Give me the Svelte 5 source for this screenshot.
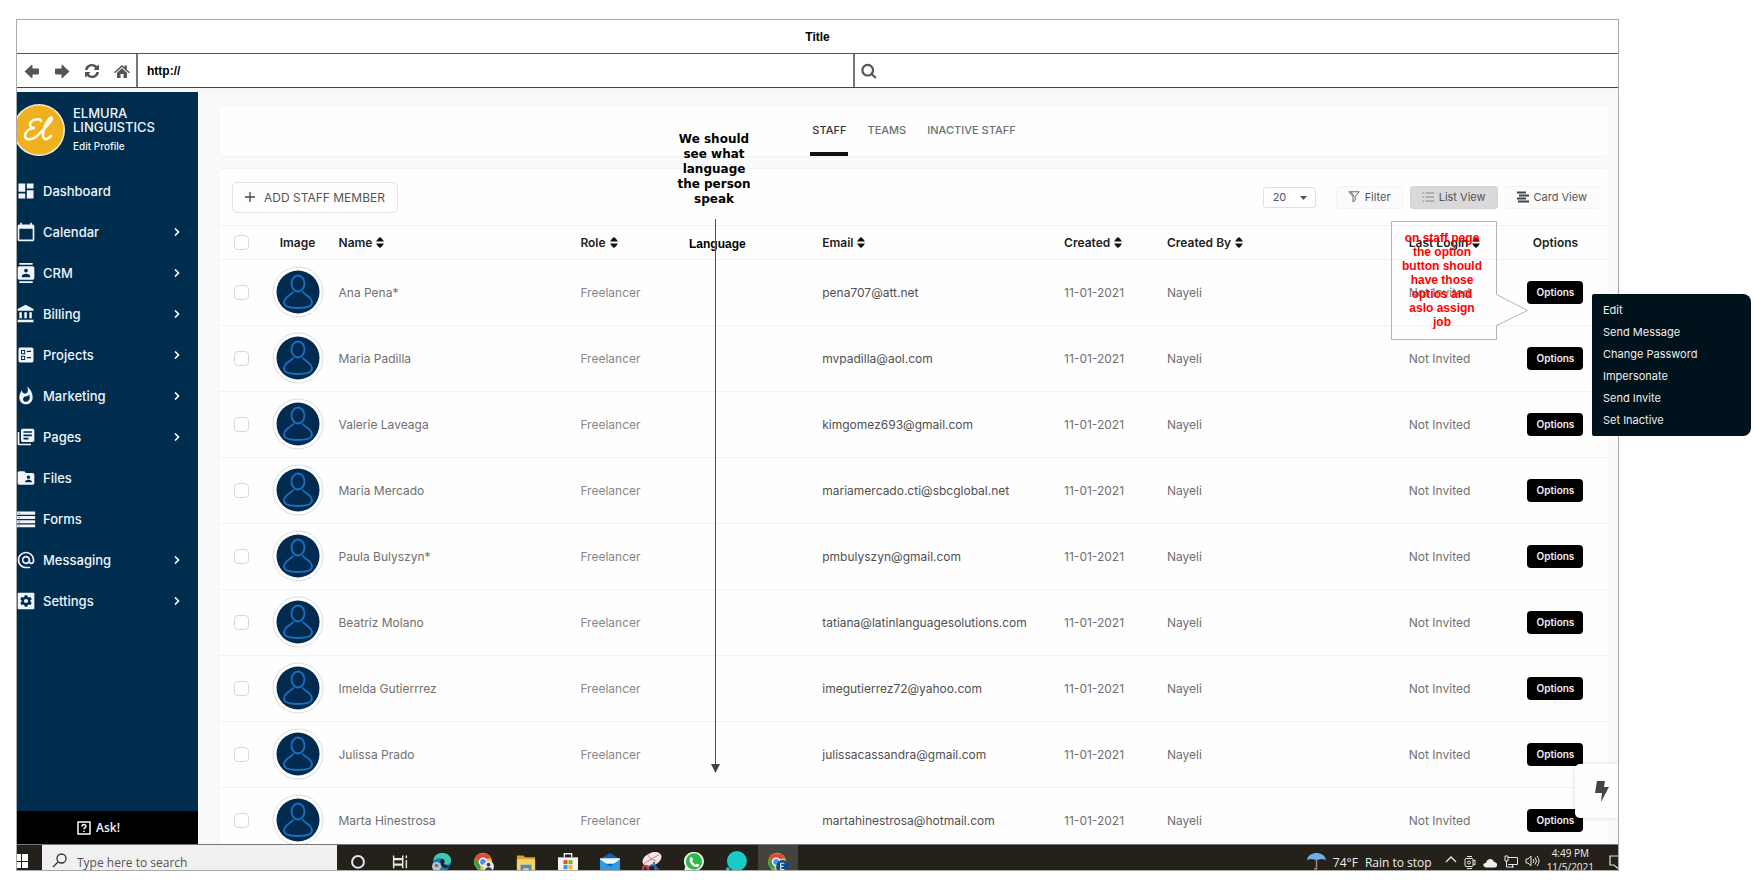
<script>
  const nav = [
    ['Dashboard', false], ['Calendar', true], ['CRM', true], ['Billing', true], ['Projects', true], ['Marketing', true],
    ['Pages', true], ['Files', false], ['Forms', false], ['Messaging', true], ['Settings', true]
  ];
  const icons = {
    Dashboard: 'M3 13h8V3H3v10zm0 8h8v-6H3v6zm10 0h8V11h-8v10zm0-18v6h8V3h-8z',
    Calendar: 'M20 3h-1V1h-2v2H7V1H5v2H4c-1.100 0-2 .9-2 2v16c0 1.100.9 2 2 2h16c1.100 0 2-.9 2-2V5c0-1.100-.9-2-2-2zm0 18H4V8h16v13z',
    CRM: 'M20 0H4v2h16V0zM4 24h16v-2H4v2zM20 4H4c-1.100 0-2 .9-2 2v12c0 1.100.9 2 2 2h16c1.100 0 2-.9 2-2V6c0-1.100-.9-2-2-2zm-8 2.750a2.250 2.250 0 110 4.500 2.250 2.250 0 010-4.500zM17 17H7v-1.500c0-1.670 3.330-2.500 5-2.500s5 .83 5 2.500V17z',
    Billing: 'M4 10v7h3v-7H4zm6 0v7h3v-7h-3zM2 22h19v-3H2v3zm14-12v7h3v-7h-3zM11.500 1L2 6v2h19V6l-9.500-5z',
    Projects: 'M19 3H5c-1.100 0-2 .9-2 2v14c0 1.100.9 2 2 2h14c1.100 0 2-.9 2-2V5c0-1.100-.9-2-2-2zM6 6h5v5H6V6zm1.200 1.200v2.600h2.600V7.200H7.200zM6 13h5v5H6v-5zm1.200 1.200v2.600h2.600v-2.600H7.200zM13 7h5v1.500h-5V7zm0 7.500h5V16h-5v-1.500z',
    Marketing: 'M13.500.67s.74 2.650.74 4.800c0 2.060-1.350 3.730-3.410 3.730-2.070 0-3.630-1.670-3.630-3.730l.03-.36C5.210 7.510 4 10.620 4 14c0 4.420 3.580 8 8 8s8-3.580 8-8C20 8.610 17.410 3.800 13.500.67zM11.710 19c-1.780 0-3.220-1.400-3.220-3.140 0-1.620 1.050-2.760 2.810-3.120 1.770-.36 3.600-1.210 4.620-2.580.39 1.290.59 2.650.59 4.040 0 2.650-2.150 4.800-4.800 4.800z',
    Pages: 'M4 6H2v14c0 1.100.9 2 2 2h14v-2H4V6zm16-4H8c-1.100 0-2 .9-2 2v12c0 1.100.9 2 2 2h12c1.100 0 2-.9 2-2V4c0-1.100-.9-2-2-2zm-1 9H9V9h10v2zm-4 4H9v-2h6v2zm4-8H9V5h10v2z',
    Files: 'M20 6h-8l-2-2H4c-1.100 0-2 .9-2 2v12c0 1.100.9 2 2 2h16c1.100 0 2-.9 2-2V8c0-1.100-.9-2-2-2zm-5 3c1.100 0 2 .9 2 2s-.9 2-2 2-2-.9-2-2 .9-2 2-2zm4 8h-8v-1c0-1.330 2.670-2 4-2s4 .67 4 2v1z',
    Forms: 'M1 3h22v4H1zM1 8.500h22v3.500H1zM1 13.500h22V17H1zM1 18.500h22V22H1zM3 4.500v1h1.500v-1zM3 9.800v1h1.500v-1zM3 14.800v1h1.500v-1zM3 19.800v1h1.500v-1z',
    Messaging: 'M12 2C6.480 2 2 6.480 2 12s4.480 10 10 10h5v-2h-5c-4.340 0-8-3.660-8-8s3.660-8 8-8 8 3.660 8 8v1.430c0 .79-.71 1.570-1.500 1.570s-1.500-.78-1.500-1.570V12c0-2.760-2.240-5-5-5s-5 2.240-5 5 2.240 5 5 5c1.380 0 2.640-.56 3.540-1.470.65.89 1.770 1.470 2.960 1.470 1.970 0 3.500-1.600 3.500-3.570V12c0-5.520-4.480-10-10-10zm0 13c-1.660 0-3-1.340-3-3s1.340-3 3-3 3 1.340 3 3-1.340 3-3 3z',
    Settings: 'M21 2H3c-.6 0-1 .4-1 1v18c0 .6.4 1 1 1h18c.6 0 1-.4 1-1V3c0-.6-.4-1-1-1zM10.500 5h3l.4 2 1.500.9 2-.7 1.500 2.600-1.600 1.300v1.800l1.600 1.300-1.500 2.600-2-.7-1.500.9-.4 2h-3l-.4-2-1.500-.9-2 .7-1.500-2.600 1.600-1.300v-1.800L5.100 9.800l1.500-2.600 2 .7 1.500-.9zM12 9.500a2.500 2.500 0 100 5 2.500 2.500 0 000-5z'
  };
  const staff = [
    ['Ana Pena*', 'pena707@att.net'],
    ['Maria Padilla', 'mvpadilla@aol.com'],
    ['Valerie Laveaga', 'kimgomez693@gmail.com'],
    ['Maria Mercado', 'mariamercado.cti@sbcglobal.net'],
    ['Paula Bulyszyn*', 'pmbulyszyn@gmail.com'],
    ['Beatriz Molano', 'tatiana@latinlanguagesolutions.com'],
    ['Imelda Gutierrrez', 'imegutierrez72@yahoo.com'],
    ['Julissa Prado', 'julissacassandra@gmail.com'],
    ['Marta Hinestrosa', 'martahinestrosa@hotmail.com']
  ];
  const menu = ['Edit', 'Send Message', 'Change Password', 'Impersonate', 'Send Invite', 'Set Inactive'];
</script>

{#snippet sort(label)}
  <button class="sort">{label}
    <svg width="8" height="11" viewBox="0 0 8 11"><path d="M0 4.500Q2 1 4 0q2 1 4 4.500zM0 6.500h8Q6 10 4 11 2 10 0 6.500z" fill="#111" /></svg>
  </button>
{/snippet}

<div class="canvas">
  <div class="window">
    <div class="title">Title</div>
    <div class="bar">
      <div class="tools">
        <button aria-label="Back"><svg width="16" height="16" viewBox="0 0 16 16"><path d="M.5 8.500L7.500 2q1-.5 1 .8V5.500H14q1 0 1 1v4q0 1-1 1H8.500v2.700q0 1.300-1 .8z" /></svg></button>
        <button aria-label="Forward"><svg width="16" height="16" viewBox="0 0 16 16"><path d="M15.500 8.500L8.500 2q-1-.5-1 .8V5.500H2q-1 0-1 1v4q0 1 1 1h5.500v2.700q0 1.300 1 .8z" /></svg></button>
        <button aria-label="Reload"><svg width="16" height="16" viewBox="0 0 16 16"><path d="M1 7C1.500 3 4.500 1 8 1c2 0 3.700.8 5 2l2-1.500V7H9.500l1.700-2C10 4 9.200 3.300 8 3.300 5.800 3.300 4.200 4.800 3.600 7zM15 9c-.5 4-3.500 6-7 6-2 0-3.700-.8-5-2l-2 1.500V9h5.500l-1.700 2c1.200 1 2 1.700 3.200 1.700 2.200 0 3.800-1.500 4.400-3.700z" /></svg></button>
        <button aria-label="Home"><svg width="16" height="16" viewBox="0 0 16 16"><path d="M8 2l2.500 2.300V2.500h2.300v4L16 9.200l-1 1L8 4 1 10.200l-1-1zM8 5.300l5 4.400V15H9.500v-4h-3v4H3V9.700z" /></svg></button>
      </div>
      <input class="url" aria-label="Address" value="http://" />
      <div class="find">
        <svg width="16" height="16" viewBox="0 0 16 16" fill="none" stroke="#555" stroke-width="2.200"><circle cx="6.700" cy="7.200" r="5.300" /><path d="M10.500 11l4.300 4" /></svg>
      </div>
    </div>

    <div class="app">
      <aside>
        <div class="profile">
          <svg class="logo" width="48" height="52" viewBox="0 0 48 52">
            <circle cx="22" cy="26" r="26" fill="#f3eeda" /><circle cx="22" cy="26" r="24.500" fill="#f0b120" />
            <path d="M24 17c-1-3-10-2-11 3-.5 3 2 4 5 4-5 0-9 3-10 7-1 6 8 6 14-1 5-5 14-13 13-16-1-2-5 3-7 8-2 6-3 12 0 13 2 .5 4-1 6-3" fill="none" stroke="#fffbe8" stroke-width="2.600" stroke-linecap="round" />
          </svg>
          <div>
            <div class="brand">ELMURA<br />LINGUISTICS</div>
            <a class="edit" href="#profile">Edit Profile</a>
          </div>
        </div>
        <nav>
          {#each nav as [name, more]}
            <a href="#{name}">
              <svg width="20" height="20" viewBox="0 0 24 24" fill="#eff5fa" fill-rule="evenodd"><path d={icons[name]} /></svg>
              <span>{name}</span>
              {#if more}<svg width="6" height="8" viewBox="0 0 6 8"><path d="M1 0.500L4.500 4 1 7.500" fill="none" stroke="#fff" stroke-width="1.600" /></svg>{/if}
            </a>
          {/each}
        </nav>
        <button class="ask">
          <svg width="14" height="14" viewBox="0 0 14 14" fill="none" stroke="#fff" stroke-width="1.500"><rect x="1" y="1" width="12" height="12" /><path d="M5 5.500C5 3 9 3 9 5.300 9 6.600 7 6.700 7 8.300M7 9.700v1.300" /></svg>
          Ask!
        </button>
      </aside>

      <main>
        <div class="card tabs">
          <button class="on">STAFF</button><button>TEAMS</button><button>INACTIVE STAFF</button>
        </div>
        <div class="card list">
          <div class="toolbar">
            <button class="add"><svg width="10" height="10" viewBox="0 0 10 10"><path d="M5 0v10M0 5h10" stroke="#444" stroke-width="1.300" /></svg>ADD STAFF MEMBER</button>
            <div class="size">
              <select aria-label="Rows per page"><option>20</option></select>
              <svg width="7" height="4" viewBox="0 0 7 4"><path d="M0 0h7L3.500 4z" fill="#555" /></svg>
            </div>
            <div class="views">
              <button><svg width="12" height="12" viewBox="0 0 12 12" fill="none" stroke="#666"><path d="M.8 .8h10.400L7.200 5.500v3.700L5 11V5.500zM3 .8L6 5.500" /></svg>Filter</button>
              <button class="on"><svg width="12" height="12" viewBox="0 0 12 12" stroke="#888"><path d="M3.500 2H12M3.500 6H12M3.500 10H12M.5 2h1.500M.5 6h1.500M.5 10h1.500" /></svg>List View</button>
              <button><svg width="12" height="12" viewBox="0 0 12 12" stroke="#444" stroke-width="1.800"><path d="M0 1.500h9M2 4.500h10M0 7.500h9M1 10.500h11" /></svg>Card View</button>
            </div>
          </div>
          <table>
            <colgroup>
              <col class="c-check" /><col class="c-img" /><col class="c-wide" /><col class="c-wide" /><col class="c-wide" />
              <col class="c-date" /><col class="c-wide" /><col class="c-login" /><col class="c-opt" />
            </colgroup>
            <thead>
              <tr>
                <th><input type="checkbox" aria-label="Select all" /></th>
                <th class="mid">Image</th>
                <th>{@render sort('Name')}</th>
                <th>{@render sort('Role')}</th>
                <th>{@render sort('Email')}</th>
                <th>{@render sort('Created')}</th>
                <th>{@render sort('Created By')}</th>
                <th>{@render sort('Last Login')}</th>
                <th class="mid">Options</th>
              </tr>
            </thead>
            <tbody>
              {#each staff as [name, email]}
                <tr>
                  <td><input type="checkbox" aria-label="Select {name}" /></td>
                  <td class="mid">
                    <svg class="avatar" width="52" height="52" viewBox="0 0 52 52">
                      <circle cx="26" cy="26" r="25" fill="#fff" stroke="#dcdde0" />
                      <circle cx="26" cy="26" r="21.500" fill="#032b50" />
                      <g fill="none" stroke="#1d70c0" stroke-width="1.800"><ellipse cx="26" cy="17.500" rx="6.500" ry="8" /><path d="M21.500 25.500C20 29 12 30 12 36.500c0 4 7 5.500 14 5.500s14-1.500 14-5.500c0-6.500-8-7.500-9.500-11" /></g>
                    </svg>
                  </td>
                  <td>{name}</td>
                  <td class="soft">Freelancer</td>
                  <td class="mail">{email}</td>
                  <td>11-01-2021</td>
                  <td>Nayeli</td>
                  <td>Not Invited</td>
                  <td class="mid"><button class="opt">Options</button></td>
                </tr>
              {/each}
            </tbody>
          </table>
        </div>
        <button class="bolt" aria-label="Quick actions"><svg width="14" height="21" viewBox="0 0 14 21"><path d="M2 0h8L9 6h5L6 21l1-9H0z" fill="#444" /></svg></button>
      </main>
    </div>

    <footer>
      <button class="start" aria-label="Start"><svg width="16" height="16" viewBox="0 0 16 16" fill="#fff"><path d="M0 0h4v7H0zM5 0h6v7H5zM0 8h4v6H0zM5 8h6v6H5z" /></svg></button>
      <label class="search">
        <svg width="16" height="16" viewBox="0 0 16 16" fill="none" stroke="#333" stroke-width="1.300"><circle cx="9.500" cy="5.500" r="4.500" /><path d="M6 9l-5 5" /></svg>
        <input aria-label="Search" placeholder="Type here to search" />
      </label>
      <div class="apps">
        <svg viewBox="0 0 24 22"><circle cx="12" cy="12" r="6.500" fill="none" stroke="#e6e6e6" stroke-width="2.200" /></svg>
        <svg viewBox="0 0 24 22"><path d="M5 5v3.500h10V5M5 19v-3.500h10V19M5 9.500h10v5H5zM19 5v3M19 10v9" fill="none" stroke="#e6e6e6" stroke-width="1.600" /></svg>
        <svg viewBox="0 0 24 22"><circle cx="12" cy="12" r="10" fill="#1478c8" /><path d="M3 8C6 0 20 0 22 9c.5 5-4 7-8 5 2-3 0-6-4-6-3 0-5 1-7 3z" fill="#3bc9a8" /><path d="M14 14c2-3 0-6-3-5-2 3 0 9 5 10l6-3c-3 1-6 0-8-2z" fill="#1f2220" /><circle cx="6" cy="17" r="5" fill="#b9c4cc" /><circle cx="6" cy="16" r="2" fill="#66737c" /></svg>
        <svg viewBox="0 0 24 22"><circle cx="11" cy="12" r="10" fill="#f2c230" /><path d="M2 8a10 10 0 0118 0l-9 1-3 5z" fill="#dd4a3d" /><path d="M2 8l6 7v6A10 10 0 012 8z" fill="#2da04c" /><circle cx="11" cy="12" r="4" fill="#4a8cf0" stroke="#fff" stroke-width="1.500" /><circle cx="17" cy="17" r="6" fill="#dfe6ee" /><circle cx="17" cy="15" r="2" fill="#333c48" /><path d="M13 21c1-4 7-4 8 0z" fill="#333c48" /></svg>
        <svg viewBox="0 0 24 22"><path d="M2 5h7l2 2h11v15H2z" fill="#d9a02c" /><path d="M2 9h20v13H2z" fill="#f8d264" /><path d="M6 15h12v7h-3v-3H9v3H6z" fill="#3e8fd0" /></svg>
        <svg viewBox="0 0 24 22"><path d="M8 7V3h8v4" fill="none" stroke="#eee" stroke-width="1.500" /><path d="M1 7h22v15H1z" fill="#f5f5f5" /><path d="M7 10h4.500v4.500H7z" fill="#e8502c" /><path d="M12.500 10H17v4.500h-4.500z" fill="#78b72a" /><path d="M7 15.500h4.500V20H7z" fill="#2a9fe0" /><path d="M12.500 15.500H17V20h-4.500z" fill="#f2b818" /></svg>
        <svg viewBox="0 0 24 22"><path d="M1 9l11-7 11 7v13H1z" fill="#0f62ac" /><path d="M1 8h22v6H1z" fill="#f4f7fa" /><path d="M1 9l11 8 11-8v13H1z" fill="#2d9ae4" /></svg>
        <svg viewBox="0 0 24 22"><ellipse cx="12" cy="9" rx="11" ry="7" transform="rotate(-25 12 9)" fill="#f0e8e8" /><path d="M3 14l8-5 9-5M11 9L7 4M11 9l6 2" stroke="#d87070" fill="none" /><path d="M5 19l8-4M14 12l2 10M14 15l5 6" stroke="#2b67a8" stroke-width="2" fill="none" /><circle cx="5" cy="19" r="3" fill="none" stroke="#d23a3a" stroke-width="2" /></svg>
        <svg viewBox="0 0 24 22"><path d="M12 1a10.500 10.500 0 11-5 19.500L1 22l1.500-5A10.500 10.500 0 0112 1z" fill="#eefaf0" /><circle cx="12" cy="11.500" r="9" fill="#2fb84c" /><path d="M8 7l2 0 1 3-1 1c1 2 2 3 4 4l1-1 3 1c0 2-2 3-4 2.500C10 16.500 7 13 7 9.500z" fill="#fff" /></svg>
        <svg viewBox="0 0 24 22"><circle cx="13" cy="11" r="11" fill="#18cdc8" /><circle cx="3" cy="20" r="2" fill="#18cdc8" /></svg>
        <div class="active"><svg viewBox="0 0 24 22"><circle cx="11" cy="12" r="10" fill="#f2c230" /><path d="M2 8a10 10 0 0118 0l-9 1-3 5z" fill="#dd4a3d" /><path d="M2 8l6 7v6A10 10 0 012 8z" fill="#2da04c" /><circle cx="10" cy="12" r="4" fill="#4a8cf0" stroke="#fff" stroke-width="1.500" /><circle cx="17" cy="17" r="7" fill="#0d4c8c" /><path d="M19 13.500h-4v7h4M15 17h3" fill="none" stroke="#d8e6f5" stroke-width="1.300" /></svg></div>
      </div>
      <div class="tray">
        <svg width="19" height="20" viewBox="0 0 19 20"><path d="M0 9C1 4 5 2 9.500 2S18 4 19 9l-4-1-5.500 1L4 8z" fill="#6bb0ea" /><path d="M9.500 8v10H7" stroke="#a08880" fill="none" stroke-width="1.500" /></svg>
        <span>74°F</span><span class="rain">Rain to stop</span>
        <svg width="12" height="8" viewBox="0 0 12 8"><path d="M1 7l5-5 5 5" fill="none" stroke="#e6e6e6" stroke-width="1.300" /></svg>
        <svg width="12" height="14" viewBox="0 0 12 14" fill="none" stroke="#e6e6e6"><rect x="1" y="3.500" width="8" height="8" rx="1" /><path d="M9 6l2-1v5l-2-1M3 1.500h5M3 13.500h5" /><circle cx="5" cy="7.500" r="1.500" /></svg>
        <svg width="14" height="14" viewBox="0 0 14 14"><path d="M3 12.500C-1 12 0 7.500 3 8c1-5 7-5 8-1 4 0 4 5 1 5.500z" fill="#eee" /></svg>
        <svg width="14" height="14" viewBox="0 0 14 14" fill="none" stroke="#e6e6e6"><path d="M4 2.500h9.500v7H4M1 1h3v5H1zM2.500 6v6H10M8.500 9.500V12" /></svg>
        <svg width="15" height="12" viewBox="0 0 15 12" fill="none" stroke="#e6e6e6"><path d="M1 4h2l3-3v10L3 8H1zM8 4q2 2 0 4M10 2.500q3 3.500 0 7M12 1q4 5 0 10" /></svg>
        <div class="clock"><div>4:49 PM</div><div>11/5/2021</div></div>
        <svg width="9" height="14" viewBox="0 0 9 14" fill="none" stroke="#e6e6e6" stroke-width="1.200"><path d="M9 1H1v9h4l4 3.500" /></svg>
      </div>
    </footer>
  </div>

  <div class="note">We should see what language the person speak</div>
  <div class="language">Language</div>
  <svg class="arrow" width="9" height="554" viewBox="0 0 9 554"><path d="M4.500 0v548" stroke="#555" /><path d="M0 545h9l-4.500 9z" fill="#444" /></svg>
  <div class="callout">
    <svg width="138" height="119" viewBox="0 0 138 119"><path d="M.5 .5h105v73l31 16-31 15v14H.5z" fill="none" stroke="#b4b4b4" /></svg>
    <p>on staff page the option button should have those optios and aslo assign job</p>
  </div>
  <div class="menu">
    {#each menu as item}<button>{item}</button>{/each}
  </div>
</div>

<style>
  :global(body) { background: #fff; }
  .canvas, .canvas * { box-sizing: border-box; }
  .canvas { position: relative; height: 100vh; padding: 19px 139px 9px 16px; font-family: Inter, sans-serif; font-size: 12px; color: #707070; overflow: hidden; }
  button { font: inherit; color: inherit; background: none; border: 0; padding: 0; }
  a { color: inherit; text-decoration: none; }
  svg { display: block; flex: none; }
  .window { height: 100%; display: flex; flex-direction: column; border: 1px solid #aaa; }
  .title { height: 33px; flex: none; display: flex; align-items: center; justify-content: center; font: bold 12px "Liberation Sans", sans-serif; color: #000; }
  .bar { height: 35px; flex: none; display: flex; border-top: 1px solid #555; border-bottom: 1px solid #444; }
  .tools { width: 121px; padding: 0 7px; display: flex; align-items: center; gap: 14px; border-right: 2px solid #777; }
  .tools svg { fill: #555; }
  .url { flex: 698; min-width: 0; border: 0; padding: 0 9px; font: bold 12px "Liberation Sans", sans-serif; color: #000; }
  .find { flex: 758; display: flex; align-items: center; padding-left: 6px; border-left: 2px solid #777; }
  .app { display: flex; flex: 1; min-height: 0; background: #fafafb; border-top: 4px solid #f5f6f7; overflow: hidden; }
  aside { width: 181px; flex: none; background: #002d4e; color: #eff5fa; display: flex; flex-direction: column; }
  .profile { height: 78px; flex: none; padding-top: 12px; display: flex; gap: 8px; }
  .brand { font-size: 13px; line-height: 14px; font-weight: 500; padding-top: 2px; }
  .edit { display: block; font-size: 10px; line-height: 14px; font-weight: 500; padding-top: 5px; }
  nav a { height: 41px; display: flex; align-items: center; gap: 7px; padding-right: 18px; font-size: 13px; font-weight: 500; }
  nav span { flex: 1; }
  nav a > svg:first-child { margin-left: -1px; }
  .ask { height: 33px; flex: none; margin-top: auto; background: #000; display: flex; align-items: center; justify-content: center; gap: 5px; font-family: "Open Sans", sans-serif; font-size: 12px; font-weight: 600; padding-right: 18px; }
  main { flex: 1; min-width: 0; padding: 13px 8px 0 20px; position: relative; }
  .card { background: #fefefe; border: 1px solid #f3f3f4; border-radius: 6px; }
  .tabs { height: 52px; display: flex; justify-content: center; gap: 17px; font-size: 11px; font-weight: 500; }
  .tabs button { padding: 2px 2px 0; border-bottom: 4px solid transparent; height: 50px; }
  .tabs .on { color: #333; border-bottom-color: #111; }
  .list { margin-top: 11px; }
  .toolbar { height: 57px; display: flex; align-items: center; padding: 0 10px 0 13px; border-bottom: 1px solid #f2f2f3; }
  .add { height: 31px; width: 166px; border: 1px solid #e3e3e5; border-radius: 5px; display: flex; align-items: center; justify-content: center; gap: 9px; color: #555; }
  .size { margin-left: auto; position: relative; width: 53px; }
  .size select { appearance: none; width: 100%; height: 21px; border: 1px solid #e0e0e2; border-radius: 3px; background: #fff; font: 11px Inter, sans-serif; color: #555; padding: 0 9px; display: block; }
  .size svg { position: absolute; right: 9px; top: 9px; }
  .views { display: flex; gap: 7px; margin-left: 20px; font-size: 11px; color: #555; }
  .views button { height: 23px; display: flex; align-items: center; gap: 5px; padding: 0 11px; border: 1px solid #f3f3f4; border-radius: 3px; background: #fbfbfb; }
  .views .on { background: #d9d9d9; border-color: #d2d2d2; }
  table { width: 100%; table-layout: fixed; border-collapse: collapse; }
  .c-check { width: 2.700%; } .c-img { width: 5.900%; } .c-wide { width: 17.400%; } .c-date { width: 7.400%; } .c-login { width: 6.700%; } .c-opt { width: 7.700%; }
  th, td { padding: 0; text-align: left; white-space: nowrap; }
  th { height: 33px; color: #222; font-size: 12px; font-weight: 600; border-bottom: 1px solid #f2f2f3; }
  td { height: 66px; border-bottom: 1px solid #f2f2f3; font-size: 12px; }
  th.mid, td.mid { text-align: center; }
  th:first-child, td:first-child { padding-left: 15px; }
  .avatar { margin: 0 auto; }
  .soft { color: #888; }
  .mail { color: #505050; }
  input[type='checkbox'] { appearance: none; display: block; width: 15px; height: 15px; margin: 0; border: 1px solid #d8d8da; border-radius: 4px; background: #fff; }
  .sort { display: inline-flex; align-items: center; gap: 4px; }
  .opt { width: 56px; height: 23px; background: #000; color: #eee; border-radius: 4px; font-size: 10px; font-weight: 600; }
  .bolt { position: absolute; right: 0; bottom: 26px; width: 43px; height: 54px; background: #fefefe; border-radius: 5px 0 0 5px; box-shadow: 0 0 5px #0002; display: flex; align-items: center; justify-content: center; padding-left: 10px; }
  footer { height: 26px; flex: none; background: #24211a; display: flex; overflow: hidden; font-family: "Open Sans", sans-serif; color: #eee; border-top: 1px solid #777; }
  .start { width: 25px; padding-top: 9px; display: flex; }
  .search { width: 295px; background: #f0f0f0; display: flex; gap: 9px; padding: 8px 10px 0; height: 40px; }
  .search input { border: 0; background: none; min-width: 0; flex: 1; font: 12px "Open Sans", sans-serif; padding: 0; height: 18px; }
  .search input::placeholder { color: #555; opacity: 1; }
  .apps { display: flex; gap: 20px; padding-left: 10px; }
  .apps svg { width: 22px; height: 20px; margin-top: 6px; }
  .active { background: #45433e; width: 40px; margin-left: -9px; padding-left: 9px; height: 30px; }
  .tray { margin-left: auto; display: flex; align-items: flex-start; gap: 7px; font-size: 12px; line-height: 16px; white-space: nowrap; }
  .tray > svg, .tray > span { margin-top: 10px; }
  .tray > svg:first-child { margin-top: 6px; }
  .tray .rain { margin-right: 6px; }
  .clock { text-align: center; font-size: 10px; line-height: 14px; padding-top: 1px; margin-right: 8px; }
  .note { position: absolute; left: 672px; top: 132px; width: 84px; text-align: center; font: bold 12px/15px "DejaVu Sans", sans-serif; color: #000; }
  .language { position: absolute; left: 689px; top: 237px; font: bold 12px/15px "Liberation Sans", sans-serif; color: #000; }
  .arrow { position: absolute; left: 711px; top: 219px; }
  .callout { position: absolute; left: 1391px; top: 221px; }
  .callout p { position: absolute; left: 8px; top: 10px; width: 86px; margin: 0; text-align: center; font: bold 12px/14px "Liberation Sans", sans-serif; color: #f00; }
  .menu { position: absolute; left: 1592px; top: 294px; width: 159px; padding: 5px 11px; background: #00121b; color: #eee; border-radius: 2px 8px 8px 2px; display: flex; flex-direction: column; font-size: 11px; }
  .menu button { height: 22px; text-align: left; }
</style>
